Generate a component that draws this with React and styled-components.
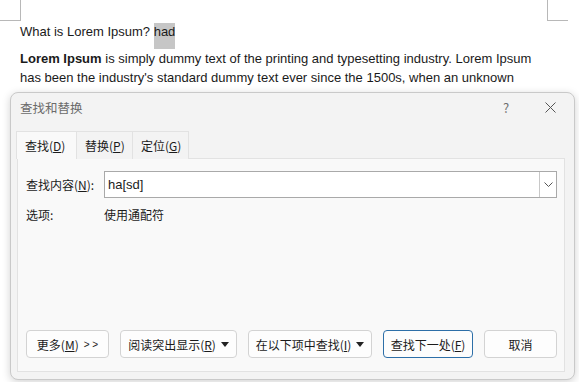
import React from 'react';
import styled, { createGlobalStyle } from 'styled-components';

const Global = createGlobalStyle`
  html, body {
    margin: 0;
    padding: 0;
    background: #fff;
  }
  body {
    font-family: "Liberation Sans", "Noto Sans CJK SC", sans-serif;
  }
`;

const CJK = `"Noto Sans CJK SC", "Liberation Sans", sans-serif`;

const Page = styled.div`
  position: relative;
  width: 579px;
  height: 382px;
  overflow: hidden;
  background: #fff;
`;

const Doc = styled.div`
  padding: 22px 0 0 20px;
  color: #1a1a1a;
  font-size: 13px;
  line-height: 19px;

  p {
    margin: 0 0 8px;
  }
`;

const Mark = styled.span`
  background: #c6c6c6;
  padding: 1px 0 10px;
`;

const Corner = styled.div`
  position: absolute;
  top: 0;
  width: 20px;
  height: 20px;
  border-bottom: 1px solid #b8b8b8;
  ${(p) => (p.right ? 'left: 547px; border-left: 1px solid #b8b8b8;' : 'left: 0; border-right: 1px solid #b8b8b8;')}
`;

const Dialog = styled.div`
  position: absolute;
  left: 10px;
  top: 92px;
  width: 565px;
  height: 288px;
  box-sizing: border-box;
  background: #f3f3f3;
  border: 1px solid #c9c9c9;
  border-radius: 8px;
  box-shadow: 0 2px 8px rgba(0, 0, 0, 0.18);
  display: flex;
  flex-direction: column;
  font-family: ${CJK};
  font-size: 12px;
  color: #1b1b1b;
`;

const TitleBar = styled.div`
  height: 28px;
  display: flex;
  align-items: center;
  padding: 0 0 0 9px;
  color: #6b6b6b;
  font-size: 12.5px;
`;

const Title = styled.div`
  flex: 1;
`;

const TitleBtn = styled.div`
  width: 40px;
  display: flex;
  justify-content: center;
  color: #6e6e6e;
  font-size: 13px;
  margin-right: ${(p) => p.gap || 0}px;
`;

const Tabs = styled.div`
  display: flex;
  margin: 10px 0 0 6px;
`;

const Tab = styled.div`
  height: 28px;
  box-sizing: border-box;
  padding: 0 0 0 8px;
  display: flex;
  align-items: center;
  white-space: nowrap;
  border: 1px solid #e2e2e2;
  border-bottom: none;
  margin-left: -1px;
  background: ${(p) => (p.active ? '#f9f9f9' : '#f3f3f3')};
  position: relative;
  z-index: ${(p) => (p.active ? 2 : 1)};
  margin-bottom: -1px;
  width: ${(p) => p.w}px;
`;

const Panel = styled.div`
  margin: 0 9px 0 6px;
  height: 214px;
  box-sizing: border-box;
  background: #f9f9f9;
  border: 1px solid #e2e2e2;
  display: flex;
  flex-direction: column;
  padding: 12px 7px 13px 8px;
`;

const Row = styled.div`
  display: grid;
  grid-template-columns: 78px 1fr;
  align-items: center;
  margin-bottom: ${(p) => p.mb || 0}px;
`;

const Combo = styled.div`
  height: 27px;
  box-sizing: border-box;
  background: #fff;
  border: 1px solid #a9a9a9;
  display: flex;
  align-items: center;
  font-family: "Liberation Sans", sans-serif;
  font-size: 13px;
  padding-left: 3px;
`;

const ComboText = styled.div`
  flex: 1;
`;

const ComboBtn = styled.div`
  width: 16px;
  height: 25px;
  border-left: 1px solid #c8c8c8;
  display: flex;
  align-items: center;
  justify-content: center;
  color: #555;
`;

const Spacer = styled.div`
  flex: 1;
`;

const Buttons = styled.div`
  display: flex;
  gap: 11px;
`;

const Button = styled.div`
  height: 28px;
  box-sizing: border-box;
  width: ${(p) => p.w}px;
  display: flex;
  align-items: center;
  justify-content: center;
  gap: 5px;
  background: #fdfdfd;
  border: 1px solid ${(p) => (p.primary ? '#2d6fa8' : '#d3d3d3')};
  border-radius: 4px;
  font-size: 12px;
  color: #1b1b1b;
  white-space: nowrap;
`;

const Arrows = styled.span`
  font-family: "Liberation Sans", sans-serif;
  font-size: 10px;
`;

const Acc = styled.span`
  text-decoration: underline;
  text-underline-offset: 1px;
`;

const Caret = () => (
  <svg width="8" height="5" viewBox="0 0 8 5">
    <path d="M0 0h8L4 5z" fill="#222" />
  </svg>
);

export default function App() {
  return (
    <Page>
      <Global />
      <Corner />
      <Corner right />
      <Doc>
        <p>
          What is Lorem Ipsum? <Mark>had</Mark>
        </p>
        <p>
          <b>Lorem Ipsum</b> is simply dummy text of the printing and typesetting industry. Lorem Ipsum
          <br />
          has been the industry's standard dummy text ever since the 1500s, when an unknown
        </p>
      </Doc>

      <Dialog>
        <TitleBar>
          <Title>查找和替换</Title>
          <TitleBtn gap={4}>?</TitleBtn>
          <TitleBtn gap={4}>
            <svg width="11" height="11" viewBox="0 0 11 11">
              <path d="M0.5 0.5l10 10M10.5 0.5l-10 10" stroke="#555" strokeWidth="1" />
            </svg>
          </TitleBtn>
        </TitleBar>

        <Tabs>
          <Tab active w={61}>
            <span>
              查找(<Acc>D</Acc>)
            </span>
          </Tab>
          <Tab w={57}>
            <span>
              替换(<Acc>P</Acc>)
            </span>
          </Tab>
          <Tab w={57}>
            <span>
              定位(<Acc>G</Acc>)
            </span>
          </Tab>
        </Tabs>

        <Panel>
          <Row mb={8}>
            <span>
              查找内容(<Acc>N</Acc>):
            </span>
            <Combo>
              <ComboText>ha[sd]</ComboText>
              <ComboBtn>
                <svg width="9" height="5" viewBox="0 0 9 5">
                  <path d="M0.5 0.5l4 4 4-4" stroke="#555" fill="none" strokeWidth="1" />
                </svg>
              </ComboBtn>
            </Combo>
          </Row>
          <Row>
            <span>选项:</span>
            <span>使用通配符</span>
          </Row>

          <Spacer />

          <Buttons>
            <Button w={83}>
              <span>
                更多(<Acc>M</Acc>)
              </span>
              <Arrows>&gt; &gt;</Arrows>
            </Button>
            <Button w={117}>
              <span>
                阅读突出显示(<Acc>R</Acc>)
              </span>
              <Caret />
            </Button>
            <Button w={124}>
              <span>
                在以下项中查找(<Acc>I</Acc>)
              </span>
              <Caret />
            </Button>
            <Button primary w={90}>
              <span>
                查找下一处(<Acc>F</Acc>)
              </span>
            </Button>
            <Button w={73}>取消</Button>
          </Buttons>
        </Panel>
      </Dialog>
    </Page>
  );
}
